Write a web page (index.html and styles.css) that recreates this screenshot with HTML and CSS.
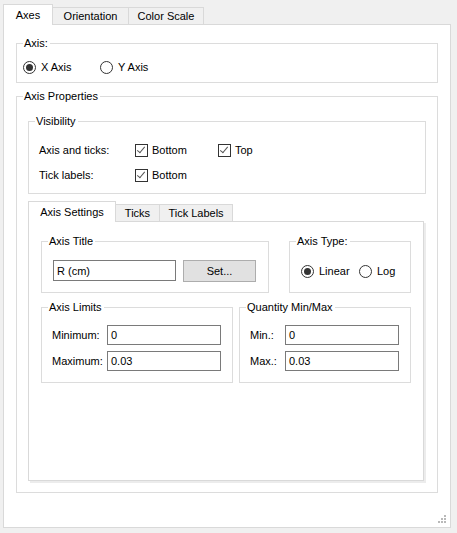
FILE: index.html
```html
<!DOCTYPE html>
<html lang="en">
<head>
    <meta charset="UTF-8">
    <title>Axes</title>
    <link rel="stylesheet" href="styles.css">
</head>
<body>
    <div class="window">
        <div class="tabbar">
            <div class="tab active">Axes</div>
            <div class="tab tab-orient">Orientation</div>
            <div class="tab tab-color">Color Scale</div>
        </div>
        <div class="pane">
            <fieldset class="group axis-group">
                <legend>Axis:</legend>
                <div class="group-body radio-line">
                    <label class="radio x-axis"><span class="radio-dot checked"></span>X Axis</label>
                    <label class="radio"><span class="radio-dot"></span>Y Axis</label>
                </div>
            </fieldset>

            <fieldset class="group props">
                <legend>Axis Properties</legend>
                <div class="group-body props-body">
                    <fieldset class="group visibility">
                        <legend>Visibility</legend>
                        <div class="group-body vis-grid">
                            <span>Axis and ticks:</span>
                            <label class="check"><span class="check-box checked"></span>Bottom</label>
                            <label class="check"><span class="check-box checked"></span>Top</label>
                            <span>Tick labels:</span>
                            <label class="check"><span class="check-box checked"></span>Bottom</label>
                            <span></span>
                        </div>
                    </fieldset>

                    <div class="inner-tabs">
                        <div class="tabbar small">
                            <div class="tab active tab-settings">Axis Settings</div>
                            <div class="tab tab-ticks">Ticks</div>
                            <div class="tab tab-labels">Tick Labels</div>
                        </div>
                        <div class="inner-pane">
                            <div class="group-row">
                                <fieldset class="group title-group">
                                    <legend>Axis Title</legend>
                                    <div class="group-body title-body">
                                        <div class="edit title-edit">R (cm)</div>
                                        <div class="btn">Set...</div>
                                    </div>
                                </fieldset>
                                <fieldset class="group type-group">
                                    <legend>Axis Type:</legend>
                                    <div class="group-body type-body">
                                        <label class="radio linear"><span class="radio-dot checked"></span>Linear</label>
                                        <label class="radio"><span class="radio-dot"></span>Log</label>
                                    </div>
                                </fieldset>
                            </div>
                            <div class="group-row second">
                                <fieldset class="group limits-group">
                                    <legend>Axis Limits</legend>
                                    <div class="group-body form-grid limits">
                                        <span>Minimum:</span>
                                        <div class="edit">0</div>
                                        <span>Maximum:</span>
                                        <div class="edit">0.03</div>
                                    </div>
                                </fieldset>
                                <fieldset class="group qty-group">
                                    <legend>Quantity Min/Max</legend>
                                    <div class="group-body form-grid qty">
                                        <span>Min.:</span>
                                        <div class="edit">0</div>
                                        <span>Max.:</span>
                                        <div class="edit">0.03</div>
                                    </div>
                                </fieldset>
                            </div>
                        </div>
                    </div>
                </div>
            </fieldset>

            <svg class="grip" width="8" height="8" viewBox="0 0 8 8">
                <rect x="6" y="0" width="2" height="2" fill="#b9b9b9"/>
                <rect x="3" y="3" width="2" height="2" fill="#b9b9b9"/>
                <rect x="6" y="3" width="2" height="2" fill="#b9b9b9"/>
                <rect x="0" y="6" width="2" height="2" fill="#b9b9b9"/>
                <rect x="3" y="6" width="2" height="2" fill="#b9b9b9"/>
                <rect x="6" y="6" width="2" height="2" fill="#b9b9b9"/>
            </svg>
        </div>
    </div>
</body>
</html>
```

FILE: styles.css
```css
* {
    box-sizing: border-box;
}
body {
    margin: 0;
    height: 533px;
    background-color: #f0f0f0;
    font-family: "Liberation Sans", Arial, sans-serif;
    font-size: 11px;
    color: #000;
}
.window {
    padding: 4px 0 0 3px;
}

/* Tabs */
.tabbar {
    display: flex;
    align-items: flex-end;
    height: 20px;
}
.tab {
    height: 17px;
    border: 1px solid #d9d9d9;
    border-bottom: none;
    background-color: #f0f0f0;
    display: flex;
    align-items: center;
    justify-content: center;
    margin-left: -1px;
}
.tab.active {
    height: 21px;
    margin-bottom: -1px;
    background-color: #fff;
    position: relative;
    z-index: 1;
    margin-left: 0;
    width: 50px;
}
.tab-orient { width: 77px; }
.tab-color { width: 76px; }

.pane {
    position: relative;
    width: 448px;
    height: 504px;
    background-color: #fff;
    border: 1px solid #d9d9d9;
    padding: 11px 12px 0 12px;
}
.grip {
    position: absolute;
    right: 4px;
    bottom: 4px;
}

/* Group boxes */
.group {
    margin: 0;
    padding: 0;
    border: 1px solid #dcdcdc;
    min-width: 0;
}
.group legend {
    margin-left: 6px;
    padding: 0 2px 0 1px;
    line-height: 14px;
}
.radio-line {
    display: flex;
    padding: 9px 0 7px 6px;
}
.radio {
    display: flex;
    align-items: center;
    height: 16px;
}
.radio.x-axis { width: 77px; }
.radio.linear { width: 58px; }
.radio-dot {
    width: 13px;
    height: 13px;
    border: 1px solid #333;
    border-radius: 50%;
    margin-right: 5px;
    display: flex;
    align-items: center;
    justify-content: center;
}
.radio-dot.checked::after {
    content: '';
    width: 7px;
    height: 7px;
    border-radius: 50%;
    background-color: #333;
}

.props {
    margin-top: 6px;
}
.props-body {
    padding: 11px;
}

.vis-grid {
    display: grid;
    grid-template-columns: 96px 83px auto;
    grid-auto-rows: 16px;
    row-gap: 9px;
    align-items: center;
    padding: 14px 10px 10px 10px;
}
.check {
    display: flex;
    align-items: center;
}
.check-box {
    width: 13px;
    height: 13px;
    border: 1px solid #333;
    margin-right: 4px;
    position: relative;
}
.check-box.checked::after {
    content: '';
    position: absolute;
    left: 3px;
    top: 0px;
    width: 3px;
    height: 7px;
    border-right: 1px solid #555;
    border-bottom: 1px solid #555;
    transform: rotate(40deg);
}

/* Inner tab widget */
.inner-tabs {
    margin-top: 7px;
}
.tab.active.tab-settings { width: 88px; }
.tab-ticks { width: 45px; }
.tab-labels { width: 74px; }
.inner-pane {
    width: 396px;
    height: 260px;
    border: 1px solid #d9d9d9;
    background-color: #fff;
    box-shadow: 2px 2px 0 #ececec;
    padding: 12px 12px 0 12px;
}
.group-row {
    display: flex;
    gap: 20px;
}
.group-row.second {
    gap: 6px;
    margin-top: 7px;
}
.title-group { width: 228px; }
.type-group { width: 122px; }
.limits-group { width: 192px; }
.qty-group { width: 172px; }

.title-body {
    display: flex;
    gap: 7px;
    padding: 12px 11px 10px 11px;
}
.edit {
    height: 20px;
    border: 1px solid #7a7a7a;
    background-color: #fff;
    padding-left: 3px;
    display: flex;
    align-items: center;
}
.title-edit {
    width: 123px;
    height: 21px;
}
.btn {
    width: 73px;
    height: 22px;
    background-color: #e1e1e1;
    border: 1px solid #adadad;
    display: flex;
    align-items: center;
    justify-content: center;
}
.type-body {
    display: flex;
    padding: 15px 0 13px 11px;
}

.form-grid {
    display: grid;
    row-gap: 6px;
    align-items: center;
    padding: 11px 10px 11px 10px;
}
.form-grid.limits { grid-template-columns: 55px 114px; }
.form-grid.qty { grid-template-columns: 35px 114px; }
```
